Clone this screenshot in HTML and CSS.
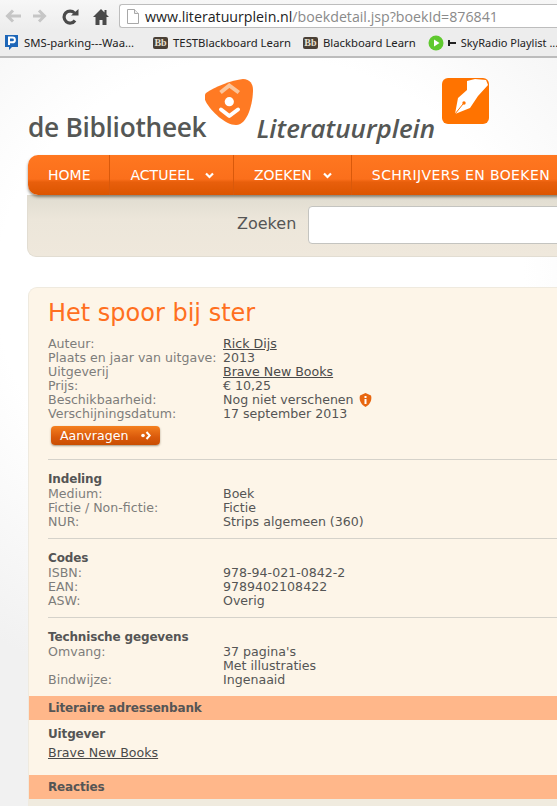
FILE: index.html
```html
<!doctype html>
<html lang="nl">
  <head>
    <meta charset="UTF-8" />
    <title>Het spoor bij ster - Literatuurplein</title>
    <link rel="stylesheet" href="styles.css">
  </head>
  <body>
    <!-- browser toolbar -->
    <div class="toolbar">
      <svg class="tool-icon" width="17" height="14" viewBox="0 0 17 14"><path d="M8 1.500 2.500 7 8 12.500M3 7h13" fill="none" stroke="#c6c6c6" stroke-width="3"/></svg>
      <svg class="tool-icon" width="17" height="14" viewBox="0 0 17 14"><path d="M6 1.500 11.500 7 6 12.500M11 7H0" fill="none" stroke="#c6c6c6" stroke-width="3"/></svg>
      <svg class="tool-icon" width="18" height="16" viewBox="0 0 18 16"><path d="M14 11.500A6 6 0 1 1 13.500 4" fill="none" stroke="#4a4a4a" stroke-width="3.200"/><path d="M10 6.500h7.500V0z" fill="#4a4a4a"/></svg>
      <svg class="tool-icon tool-home" width="16" height="16" viewBox="0 0 16 16"><path d="M8 0 0 8h2.500v8h4v-5h3v5h4V8H16l-2.500-2.500V1h-2v2.500z" fill="#4a4a4a"/></svg>
      <div class="omnibox">
        <svg width="12" height="15" viewBox="0 0 12 15"><path d="M.5.500h7l4 4v10H.5z" fill="#fff" stroke="#a8a8a8"/><path d="M7.500.500v4h4" fill="#eee" stroke="#a8a8a8"/></svg>
        <span class="url"><span class="url-host">www.literatuurplein.nl</span>/boekdetail.jsp?boekId=876841</span>
      </div>
    </div>
    <div class="bookmarks">
      <a class="bookmark bookmark-first">
        <svg width="15" height="17" viewBox="0 0 15 17"><path d="M1 1h13v12H8l-3 3v-3H1z" fill="#1d66b8"/><path d="M5 11V3.500h3.500a2.300 2.300 0 0 1 0 4.800H5" fill="none" stroke="#fff" stroke-width="2"/></svg>
        <span>SMS-parking---Waa...</span>
      </a>
      <a class="bookmark">
        <span class="bb-icon">Bb</span>
        <span>TESTBlackboard Learn</span>
      </a>
      <a class="bookmark">
        <span class="bb-icon">Bb</span>
        <span>Blackboard Learn</span>
      </a>
      <a class="bookmark bookmark-last">
        <svg width="16" height="16" viewBox="0 0 16 16"><circle cx="8" cy="8" r="7.500" fill="#5fc92e"/><path d="M6 4.500 11.500 8 6 11.500z" fill="#fff"/></svg>
        <svg class="pin" width="8" height="6" viewBox="0 0 8 6"><path d="M0 0h2v2h6v2H2v2H0z" fill="#222"/></svg>
        <span>SkyRadio Playlist ...</span>
      </a>
    </div>

    <div class="page">
      <header class="logos">
        <span class="logo-bieb">de Bibliotheek</span>
        <svg class="logo-blob" width="48" height="46" viewBox="0 0 48 46">
          <path d="M1 14C9 8 27 1 38 0c7 0 10 5 10 11 0 12-5 35-17 35C20 46 6 32 1 23c-2-4-2-7 0-9z" fill="#ff7a23"/>
          <path d="M15.500 13.500 24.300 6.500l9.500 7" fill="none" stroke="#fbc49a" stroke-width="4"/>
          <circle cx="24.300" cy="22.700" r="4.600" fill="#fff"/>
          <path d="M16 30.500 24.300 37l8.700-6.500" fill="none" stroke="#fff" stroke-width="4" stroke-linecap="round" stroke-linejoin="round"/>
        </svg>
        <span class="logo-plein">Literatuurplein</span>
        <svg class="logo-pen" width="47" height="46" viewBox="0 0 47 46">
          <rect width="47" height="46" rx="6" fill="#ff7300"/>
          <path d="M13 36 16 20 25 12 25 3 33 1 44 2 46 7 36 18 28 30z" fill="#fff"/>
          <path d="M13 36 21 26" stroke="#ff7300" stroke-width="1"/>
          <circle cx="22" cy="25" r="1.700" fill="#ff7300"/>
        </svg>
      </header>

      <nav class="menu">
        <a class="menu-item">HOME</a>
        <a class="menu-item">ACTUEEL <svg width="9" height="7" viewBox="0 0 9 7"><path d="M1 1.500 4.500 5 8 1.500" fill="none" stroke="#fff" stroke-width="2.200"/></svg></a>
        <a class="menu-item">ZOEKEN <svg width="9" height="7" viewBox="0 0 9 7"><path d="M1 1.500 4.500 5 8 1.500" fill="none" stroke="#fff" stroke-width="2.200"/></svg></a>
        <a class="menu-item menu-item-long">SCHRIJVERS EN BOEKEN</a>
      </nav>
      <div class="search">
        <label class="search-label">Zoeken</label>
        <input class="search-input" type="text">
      </div>

      <main class="card">
        <h1 class="title">Het spoor bij ster</h1>
        <section class="block block-first">
          <div class="rows">
            <span class="label">Auteur:</span><a class="value link">Rick Dijs</a>
            <span class="label">Plaats en jaar van uitgave:</span><span class="value">2013</span>
            <span class="label">Uitgeverij</span><a class="value link">Brave New Books</a>
            <span class="label">Prijs:</span><span class="value">€ 10,25</span>
            <span class="label">Beschikbaarheid:</span>
            <span class="value">Nog niet verschenen
              <svg class="info" width="13" height="14" viewBox="0 0 13 14"><path d="M1 2.500 6.500 0 12 2.500C13.500 8 10 12.500 6.500 14 3 12.500-.5 8 1 2.500z" fill="#e8660f"/><path d="M5.500 3h2v2h-2zM5.500 6h2v5h-2z" fill="#fff"/></svg>
            </span>
            <span class="label">Verschijningsdatum:</span><span class="value">17 september 2013</span>
          </div>
          <a class="request-btn">Aanvragen
            <svg width="10" height="9" viewBox="0 0 10 9"><circle cx="2" cy="4.500" r="1.800" fill="#fff"/><path d="M5.500 1l3.200 3.500L5.500 8" fill="none" stroke="#fff" stroke-width="2"/></svg>
          </a>
        </section>

        <section class="block">
          <h2 class="block-head">Indeling</h2>
          <div class="rows">
            <span class="label">Medium:</span><span class="value">Boek</span>
            <span class="label">Fictie / Non-fictie:</span><span class="value">Fictie</span>
            <span class="label">NUR:</span><span class="value">Strips algemeen (360)</span>
          </div>
        </section>

        <section class="block">
          <h2 class="block-head">Codes</h2>
          <div class="rows">
            <span class="label">ISBN:</span><span class="value">978-94-021-0842-2</span>
            <span class="label">EAN:</span><span class="value">9789402108422</span>
            <span class="label">ASW:</span><span class="value">Overig</span>
          </div>
        </section>

        <section class="block block-last">
          <h2 class="block-head">Technische gegevens</h2>
          <div class="rows">
            <span class="label">Omvang:</span><span class="value">37 pagina's</span>
            <span class="label"></span><span class="value">Met illustraties</span>
            <span class="label">Bindwijze:</span><span class="value">Ingenaaid</span>
          </div>
        </section>

        <h2 class="band">Literaire adressenbank</h2>
        <section class="publisher">
          <h3 class="block-head">Uitgever</h3>
          <a class="link">Brave New Books</a>
        </section>

        <h2 class="band">Reacties</h2>
        <div class="card-foot"></div>
      </main>
    </div>
  </body>
</html>
```

FILE: styles.css
```css
* {
  margin: 0;
  padding: 0;
  box-sizing: border-box;
}

html,
body {
  height: 806px;
  overflow: hidden;
}

body {
  font-family: "DejaVu Sans", Verdana, sans-serif;
  font-size: 12.6px;
  color: #555;
  background: #fff;
}

/* browser chrome */
.toolbar {
  height: 30px;
  padding: 4px 0 0 5px;
  display: flex;
  align-items: flex-start;
  background: linear-gradient(#f7f7f7, #ededed);
}

.tool-icon {
  margin-top: 5px;
  margin-right: 11px;
  flex-shrink: 0;
}

.tool-home {
  margin-left: 3px;
}

.omnibox {
  width: 500px;
  height: 24px;
  margin-left: -1px;
  padding-left: 7px;
  display: flex;
  align-items: center;
  gap: 6px;
  flex-shrink: 0;
  background: #fff;
  border: 1px solid #bdbdbd;
  border-right: 0;
  border-radius: 3px 0 0 3px;
}

.url {
  font-family: "Open Sans", sans-serif;
  font-size: 14.2px;
  color: #8a8a8a;
  white-space: nowrap;
}

.url-host {
  color: #222;
}

.bookmarks {
  height: 28px;
  padding: 0 0 1px 4px;
  display: flex;
  align-items: center;
  gap: 12px;
  overflow: hidden;
  font-family: "Noto Sans", sans-serif;
  font-size: 11.3px;
  color: #222;
  white-space: nowrap;
  background: #ededed;
  border-bottom: 2px solid #bcbcbc;
}

.bookmark {
  display: flex;
  align-items: center;
  gap: 5px;
  flex-shrink: 0;
}

.bookmark-first {
  margin-right: 7px;
}

.bookmark-last {
  font-size: 11px;
}

.pin {
  margin-left: -1px;
}

.bb-icon {
  width: 15px;
  height: 12px;
  font-family: "Liberation Serif", serif;
  font-size: 10px;
  font-weight: 700;
  line-height: 12px;
  text-align: center;
  color: #e8e0d0;
  background: #4a4036;
  border-radius: 2px;
}

/* page */
.page {
  height: 748px;
  padding-left: 28px;
  overflow: hidden;
  background: radial-gradient(ellipse 480px 420px at 260px 230px, #fff 55%, #f1f1f1 100%);
}

.logos {
  width: 470px;
  height: 97px;
  padding-top: 21px;
  position: relative;
  display: flex;
  align-items: flex-end;
  color: #555755;
  font-family: "Open Sans", sans-serif;
  font-size: 26.3px;
  font-weight: 600;
  white-space: nowrap;
}

.logo-bieb {
  margin-bottom: 10px;
  letter-spacing: -0.3px;
}

.logo-plein {
  margin-bottom: 9px;
  margin-left: 50px;
  font-style: italic;
  font-size: 26px;
}

.logo-blob,
.logo-pen {
  position: absolute;
}

.logo-blob {
  left: 177px;
  top: 21px;
}

.logo-pen {
  left: 414px;
  top: 20px;
}

.menu {
  width: 640px;
  height: 40px;
  display: flex;
  position: relative;
  background: linear-gradient(#ff7720 0%, #fb6f1b 60%, #e85f0c 68%, #dc5500 100%);
  border-radius: 10px 0 0 10px;
  box-shadow: 0 2px 3px rgba(60, 50, 30, 0.55);
}

.menu-item {
  padding: 0 19px 0 20px;
  display: flex;
  align-items: center;
  gap: 11px;
  font-size: 14px;
  color: #fff;
  white-space: nowrap;
  border-right: 1px solid #d9590b;
}

.menu-item-long {
  letter-spacing: 0.4px;
}

.search {
  width: 640px;
  height: 62px;
  margin-left: -1px;
  padding: 11px 0 0 209px;
  display: flex;
  gap: 12px;
  background: linear-gradient(#e0dcd0, #ece6da 40%, #efe8dc);
  border: 1px solid #e2ddd2;
  border-top: 0;
  border-radius: 0 0 0 9px;
}

.search-label {
  font-size: 16px;
  line-height: 36px;
  color: #555;
}

.search-input {
  width: 300px;
  height: 38px;
  background: #fff;
  border: 1px solid #c4c4c0;
  border-radius: 4px;
}

.card {
  width: 640px;
  margin-top: 30px;
  background: #fdf5e8;
  border: 1px solid #efeadf;
  border-right: 0;
  border-radius: 9px 0 0 0;
}

.title {
  padding: 11px 0 0 19px;
  font-size: 24px;
  font-weight: 400;
  line-height: 29px;
  color: #ff6f20;
}

.block {
  margin: 0 0 0 19px;
  padding: 12px 0 9px;
  border-bottom: 1px solid #d5d2ca;
  line-height: 14px;
}

.block-first {
  padding: 9px 0 14px;
}

.block-last {
  padding-bottom: 9px;
  border-bottom: 0;
}

.block-head {
  font-size: 12px;
  font-weight: 700;
  line-height: 14px;
  letter-spacing: -0.15px;
  margin-bottom: 1px;
  color: #555;
}

.rows {
  display: grid;
  grid-template-columns: 175px 1fr;
}

.label {
  color: #7d7d7b;
}

.value {
  color: #555;
}

.link {
  color: #4a4a4a;
  text-decoration: underline;
}

.block .value.link {
  justify-self: start;
}

.info {
  margin-left: 1px;
  vertical-align: -3px;
}

.request-btn {
  width: 109px;
  height: 19px;
  margin: 5px 0 0 3px;
  padding: 0 9px;
  display: flex;
  align-items: center;
  justify-content: space-between;
  color: #fff;
  background: linear-gradient(#f5801f, #d9590b 60%, #c94e02);
  border-radius: 4px;
  box-shadow: 0 1px 2px rgba(80, 60, 30, 0.5);
}

.band {
  height: 24px;
  padding-left: 19px;
  font-size: 12px;
  font-weight: 700;
  line-height: 25px;
  letter-spacing: -0.15px;
  color: #555;
  background: #ffb78a;
}

.publisher {
  height: 55px;
  padding: 7px 0 0 19px;
}

.publisher .block-head {
  margin-bottom: 4px;
}

.card-foot {
  height: 20px;
  background: #f0ebdf;
}
```
